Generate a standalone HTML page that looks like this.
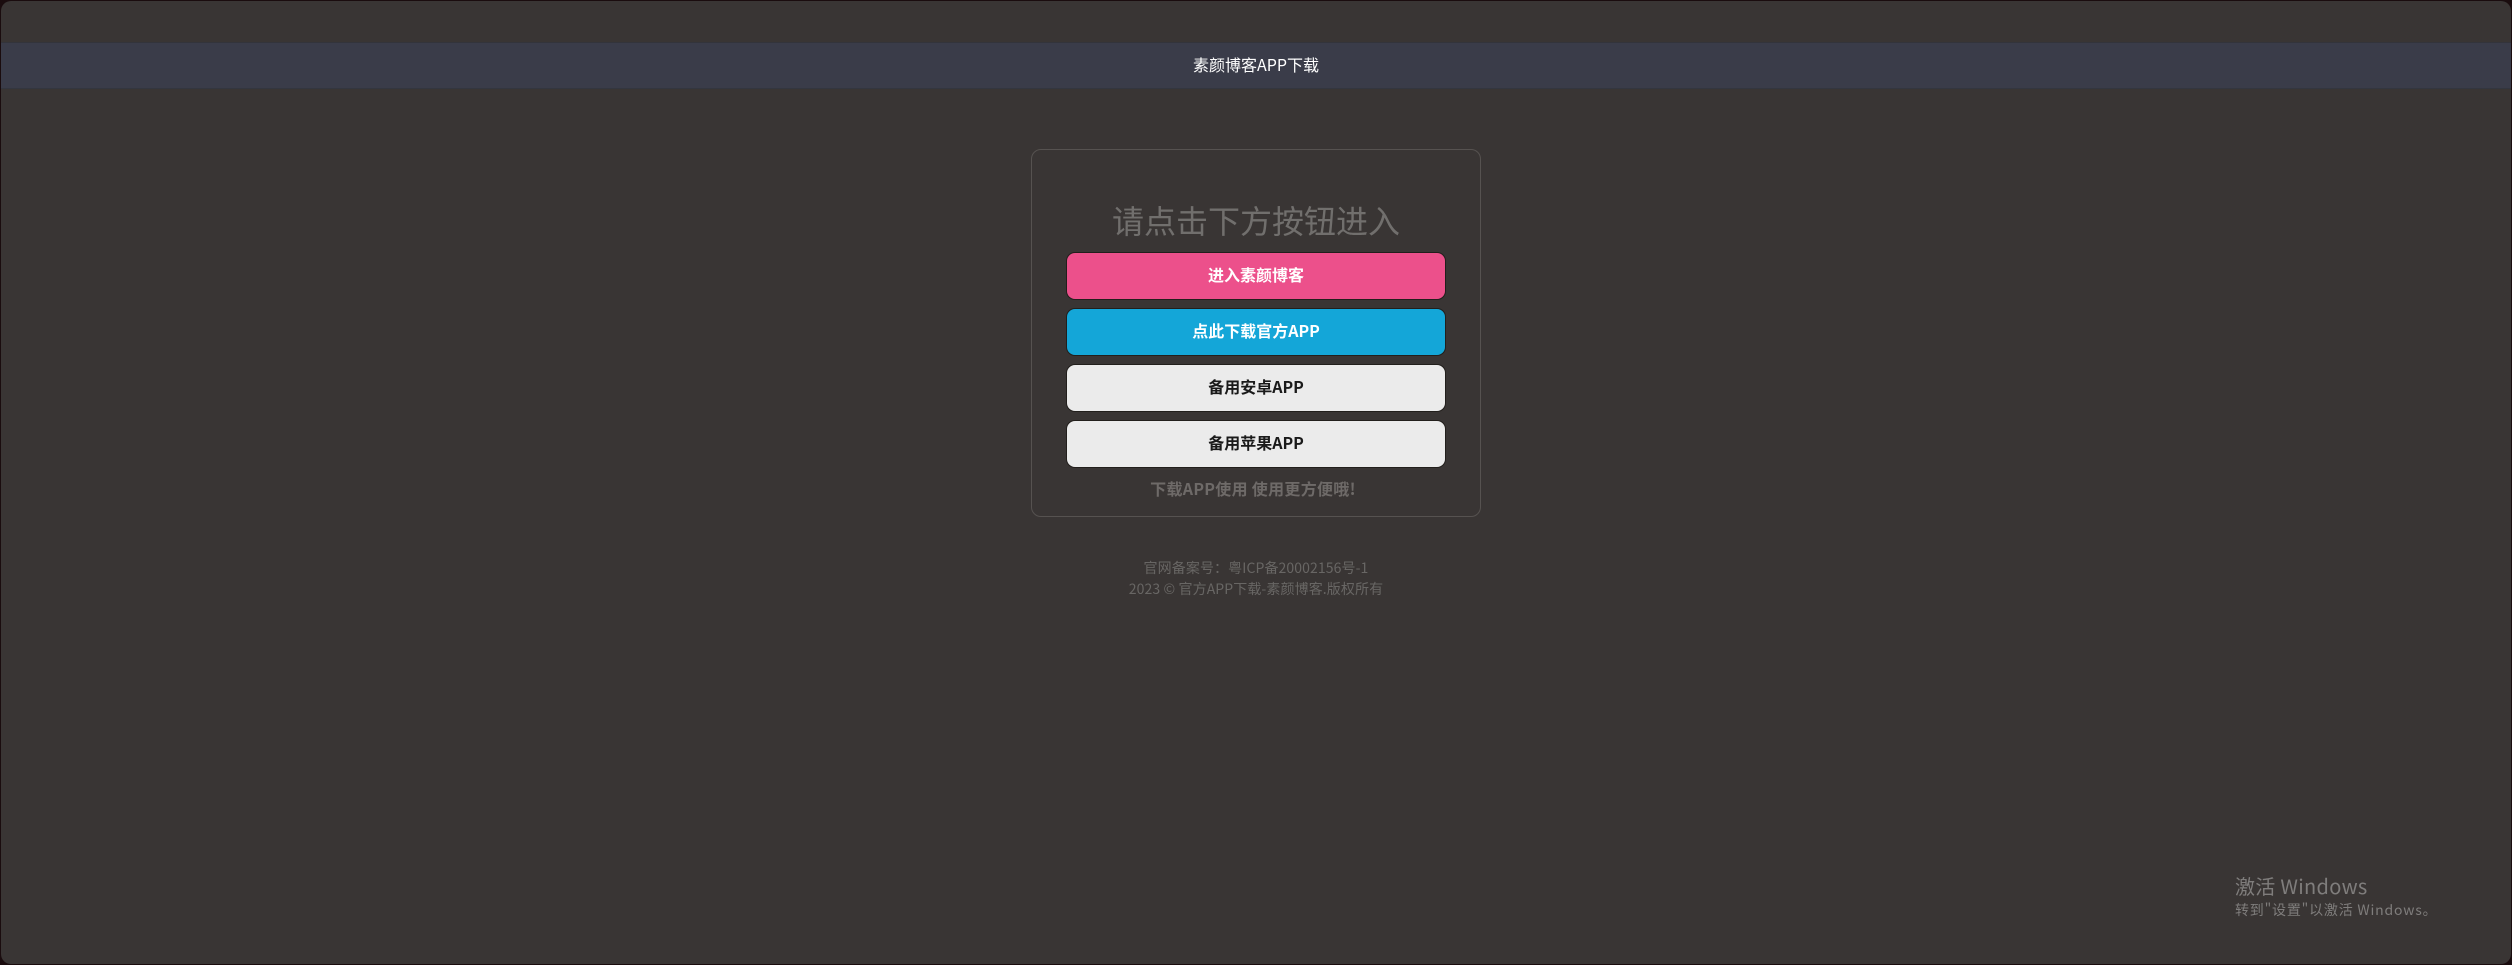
<!DOCTYPE html>
<html lang="zh-CN">
<head>
<meta charset="utf-8">
<title>素颜博客APP下载</title>
<style>
html,body{margin:0;padding:0;width:2512px;height:965px;overflow:hidden;background:#1a0c0e}
body{position:relative;font-family:"Noto Sans CJK SC","Liberation Sans",sans-serif}
#win{position:absolute;left:1px;top:1px;width:2510px;height:963px;background:#393534;border-radius:10px;overflow:hidden}
.a{position:absolute;white-space:nowrap}
.c{text-align:center}
#nav{position:absolute;left:-1px;top:41px;width:2512px;height:45px;background:#3a3c49;border-top:1px solid #33343b;border-bottom:1px solid #33363f}
#navt{left:0;width:2512px;top:41px;height:46px;line-height:46px;font-size:16px;color:#fff}
#card{position:absolute;left:1031px;top:149px;width:448px;height:366px;border:1px solid #565250;border-radius:10px}
.btn{position:absolute;left:1067px;width:378px;height:46px;line-height:42px;border-radius:8px;box-shadow:0 0 0 1px rgba(20,16,14,.6);text-align:center;font-size:16px;font-weight:bold}
#title{left:1031px;width:450px;top:199px;height:42px;line-height:42px;font-size:32px;color:#716f6d}
#note{left:1028px;width:450px;top:476px;height:24px;line-height:24px;font-size:16px;font-weight:bold;color:#6e6a68;letter-spacing:.3px}
.f{left:0;width:2512px;font-size:14px;color:#686664;height:21px;line-height:21px;letter-spacing:.1px}
</style>
</head>
<body>
<div id="win">
<div id="nav"></div>
</div>
<div class="a c" id="navt">素颜博客APP下载</div>
<div id="card"></div>
<div class="a c" id="title">请点击下方按钮进入</div>
<div class="btn" style="top:253px;background:#ec508b;color:#fff">进入素颜博客</div>
<div class="btn" style="top:309px;background:#14a6d8;color:#fff">点此下载官方APP</div>
<div class="btn" style="top:365px;background:#ebebeb;color:#1a1a1a">备用安卓APP</div>
<div class="btn" style="top:421px;background:#ebebeb;color:#1a1a1a">备用苹果APP</div>
<div class="a c" id="note">下载APP使用 使用更方便哦!</div>
<div class="a c f" style="top:558px">官网备案号：粤ICP备20002156号-1</div>
<div class="a c f" style="top:579px">2023 © 官方APP下载-素颜博客.版权所有</div>
<div class="a" style="left:2235px;top:872px;font-size:20px;line-height:28px;color:#7f7d7c;letter-spacing:.3px">激活 Windows</div>
<div class="a" style="left:2235px;top:900px;font-size:14px;line-height:20px;color:#7f7d7c;letter-spacing:.8px">转到"设置"以激活 Windows。</div>
</body>
</html>
